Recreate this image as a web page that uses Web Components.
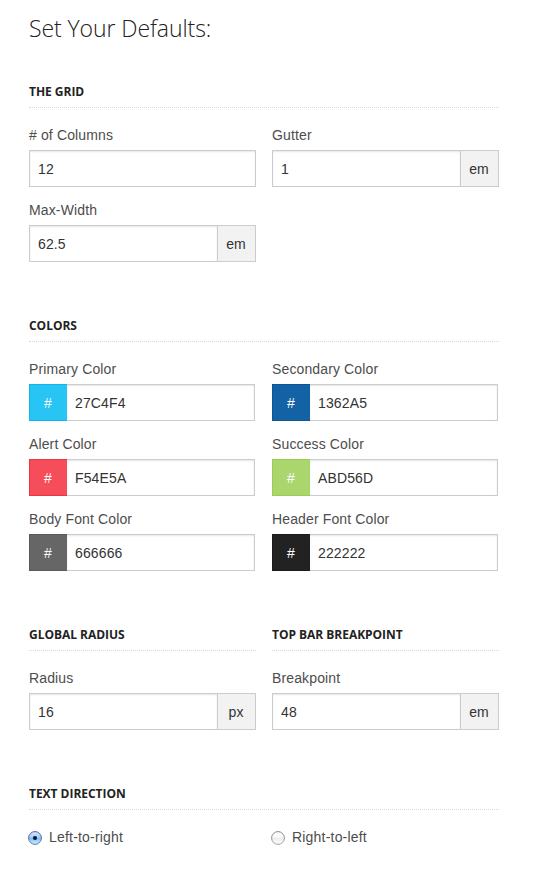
<!DOCTYPE html>
<html lang="en">
<head>
<meta charset="utf-8">
<title>Set Your Defaults</title>
<style>
  body { margin: 0; min-height: 880px; background: #fff; color: #4d4d4d; font: 14px/22px "Liberation Sans", Arial, sans-serif; letter-spacing: .13px; }
</style>
</head>
<body>
<defaults-form>
  <span slot="title">Set Your Defaults:</span>
  <form-section heading="THE GRID">
    <text-field label="# of Columns" value="12"></text-field>
    <text-field label="Gutter" value="1" unit="em"></text-field>
    <text-field label="Max-Width" value="62.5" unit="em"></text-field>
  </form-section>
  <form-section heading="COLORS">
    <color-field label="Primary Color" value="27C4F4" edge="#10b4ee"></color-field>
    <color-field label="Secondary Color" value="1362A5" edge="#0f5594"></color-field>
    <color-field label="Alert Color" value="F54E5A" edge="#e93642"></color-field>
    <color-field label="Success Color" value="ABD56D" edge="#9ccc55"></color-field>
    <color-field label="Body Font Color" value="666666" edge="#595959"></color-field>
    <color-field label="Header Font Color" value="222222" edge="#1b1b1b"></color-field>
  </form-section>
  <section-pair>
    <form-section heading="GLOBAL RADIUS" narrow>
      <text-field label="Radius" value="16" unit="px"></text-field>
    </form-section>
    <form-section heading="TOP BAR BREAKPOINT" narrow>
      <text-field label="Breakpoint" value="48" unit="em"></text-field>
    </form-section>
  </section-pair>
  <form-section heading="TEXT DIRECTION">
    <radio-option checked>Left-to-right</radio-option>
    <radio-option>Right-to-left</radio-option>
  </form-section>
</defaults-form>
<script>
  const define = (name, render) => customElements.define(name, class extends HTMLElement {
    constructor() {
      super();
      this.attachShadow({ mode: "open" }).innerHTML = render(this);
    }
  });

  define("defaults-form", () => `
    <style>
      :host { display: flex; flex-direction: column; gap: 56px; width: 470px; padding: 11px 0 24px 29px; }
      h1 { margin: 0 0 -17px; height: 34px; font: 300 23px/34px "Open Sans", sans-serif; letter-spacing: -.08px; color: #222; white-space: nowrap; }
    </style>
    <h1><slot name="title"></slot></h1>
    <slot></slot>`);

  define("section-pair", () => `
    <style>:host { display: grid; grid-template-columns: 227px 227px; column-gap: 16px; }</style>
    <slot></slot>`);

  define("form-section", el => `
    <style>
      :host { display: block; }
      h2 { box-sizing: border-box; height: 24px; margin: 0 0 20px; border-bottom: 1px dotted #d8d8d8;
           font: 700 12px/16px "Open Sans", sans-serif; letter-spacing: -.03px; color: #222; white-space: nowrap; }
      .fields { display: grid; grid-template-columns: 227px 227px; gap: 16px; }
      :host([narrow]) .fields { grid-template-columns: 227px; }
    </style>
    <h2>${el.getAttribute("heading")}</h2>
    <div class="fields"><slot></slot></div>`);

  const fieldStyle = `
    :host { display: block; }
    .label { height: 22px; line-height: 15px; }
    .row { display: flex; height: 37px; line-height: 36px; color: #333; }
    .row > * { box-sizing: border-box; border: 1px solid #ccc; }
    .input { flex: 1; padding: 0 8px; background: #fff; box-shadow: inset 0 1px 2px rgba(0,0,0,.1); }
    .tag { width: 38px; padding-right: 1px; text-align: center; }`;

  define("text-field", el => `
    <style>${fieldStyle}
      .tag { background: #f2f2f2; border-left: 0; letter-spacing: 0; }
    </style>
    <div class="label">${el.getAttribute("label")}</div>
    <div class="row">
      <div class="input">${el.getAttribute("value")}</div>
      ${el.hasAttribute("unit") ? `<div class="tag">${el.getAttribute("unit")}</div>` : ""}
    </div>`);

  define("color-field", el => `
    <style>${fieldStyle}
      .row { width: 226px; }
      .tag { color: #fff; background: #${el.getAttribute("value")}; border-color: ${el.getAttribute("edge")}; border-right: 0; }
      .input { border-left: 0; }
    </style>
    <div class="label">${el.getAttribute("label")}</div>
    <div class="row">
      <div class="tag">#</div>
      <div class="input">${el.getAttribute("value")}</div>
    </div>`);

  define("radio-option", el => `
    <style>
      :host { display: flex; align-items: flex-start; gap: 6px; height: 17px; margin-left: -1px; line-height: 15px; letter-spacing: .2px; }
      svg { display: block; width: 15px; height: 15px; margin-top: 1px; }
    </style>
    <svg viewBox="0 0 15 15">
      <defs>
        <linearGradient id="off" x2="0" y2="1"><stop offset="0" stop-color="#fff"/><stop offset=".48" stop-color="#f7f7f7"/><stop offset=".52" stop-color="#ececec"/><stop offset="1" stop-color="#fff"/></linearGradient>
        <linearGradient id="on" x2="0" y2="1"><stop offset="0" stop-color="#dcebfa"/><stop offset=".45" stop-color="#a0cdf5"/><stop offset=".55" stop-color="#80c0f5"/><stop offset="1" stop-color="#ccf6ff"/></linearGradient>
        <linearGradient id="offEdge" x2="0" y2="1"><stop offset="0" stop-color="#858585"/><stop offset="1" stop-color="#a2a2a2"/></linearGradient>
        <linearGradient id="onEdge" x2="0" y2="1"><stop offset="0" stop-color="#5557a5"/><stop offset="1" stop-color="#587ca9"/></linearGradient>
      </defs>
      ${el.hasAttribute("checked")
        ? `<circle cx="7" cy="7" r="6.4" fill="url(#on)" stroke="url(#onEdge)"/><circle cx="7" cy="7" r="2.1" fill="#0a1730"/>`
        : `<circle cx="7" cy="7" r="6.4" fill="url(#off)" stroke="url(#offEdge)"/>`}
    </svg>
    <span><slot></slot></span>`);
</script>
</body>
</html>
